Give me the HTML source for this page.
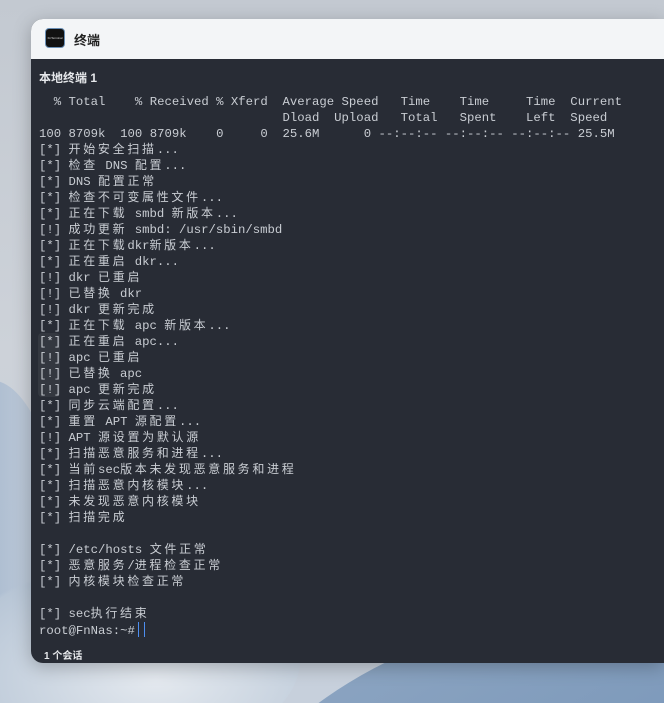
<!DOCTYPE html>
<html><head><meta charset="utf-8"><style>
html,body{margin:0;width:664px;height:703px;overflow:hidden}
body{position:relative;font-family:"Liberation Sans","Noto Sans CJK SC",sans-serif}
.bg{position:absolute;left:0;top:0;width:664px;height:703px;overflow:hidden;background:linear-gradient(180deg,#c3c9d1 0%,#cdd2d9 50%,#c7d0dc 100%)}
.wave{position:absolute;left:240px;top:600px;width:700px;height:300px;border-radius:50% 0 0 0;background:linear-gradient(160deg,#8ea6c2,#6f8fb5);transform:rotate(-12deg)}
.wave2{position:absolute;left:-60px;top:560px;width:360px;height:200px;border-radius:50%;background:radial-gradient(ellipse at 60% 60%,#e4e9ef,#b8c6d6 70%,transparent 72%)}
.lw{position:absolute;left:-80px;top:380px;width:140px;height:340px;border-radius:50%;background:linear-gradient(90deg,#7f9bbd,#c8d2de);opacity:.8}
.win{position:absolute;left:31px;top:19px;width:633px;height:644px;border-radius:12px 0 0 12px;overflow:hidden;background:#282c35;box-shadow:0 4px 18px rgba(0,0,0,.25)}
.tb{height:40px;background:#f3f5f7;position:relative}
.ic{position:absolute;left:14px;top:9px;width:20px;height:20px;border-radius:4px;background:#111;border:1px solid #6a8fb5;box-sizing:border-box;color:#ddd;font-size:3px;line-height:18px;text-align:center;overflow:hidden}
.tt{position:absolute;left:43px;top:11px;font-size:13px;font-weight:bold;color:#222}
.h{position:absolute;left:8px;top:50px;color:#e6e8eb;font-size:12px;font-weight:bold}
pre{position:absolute;left:8px;top:75px;margin:0;font-family:"Liberation Mono","Noto Sans CJK SC",monospace;font-size:12.3px;line-height:16px;color:#c9cdd3}
.c{font-family:"Noto Sans CJK SC",sans-serif;letter-spacing:2.7px;font-size:12px;line-height:0}
.cur{display:inline-block;width:1px;height:15px;background:#4d8ef0;vertical-align:-3px;margin-left:3px;box-shadow:6px 0 0 #4d8ef0}
.ft{position:absolute;left:13px;top:628px;color:#e6e8eb;font-size:10px;font-weight:bold}
.ov{position:absolute;left:7px;top:314px;width:22px;height:64px;background:rgba(255,255,255,.06);border-radius:4px}
</style></head><body>
<div class="bg"><div class="lw"></div><div class="wave2"></div><div class="wave"></div></div>
<div class="win">
<div class="tb"><div class="ic">FnTerminal</div><div class="tt">终端</div></div>
<div class="h">本地终端 1</div>
<div class="ov"></div>
<pre>  % Total    % Received % Xferd  Average Speed   Time    Time     Time  Current
                                 Dload  Upload   Total   Spent    Left  Speed
100 8709k  100 8709k    0     0  25.6M      0 --:--:-- --:--:-- --:--:-- 25.5M
[*] <span class="c">开始安全扫描</span>...
[*] <span class="c">检查</span> DNS <span class="c">配置</span>...
[*] DNS <span class="c">配置正常</span>
[*] <span class="c">检查不可变属性文件</span>...
[*] <span class="c">正在下载</span> smbd <span class="c">新版本</span>...
[!] <span class="c">成功更新</span> smbd: /usr/sbin/smbd
[*] <span class="c">正在下载</span>dkr<span class="c">新版本</span>...
[*] <span class="c">正在重启</span> dkr...
[!] dkr <span class="c">已重启</span>
[!] <span class="c">已替换</span> dkr
[!] dkr <span class="c">更新完成</span>
[*] <span class="c">正在下载</span> apc <span class="c">新版本</span>...
[*] <span class="c">正在重启</span> apc...
[!] apc <span class="c">已重启</span>
[!] <span class="c">已替换</span> apc
[!] apc <span class="c">更新完成</span>
[*] <span class="c">同步云端配置</span>...
[*] <span class="c">重置</span> APT <span class="c">源配置</span>...
[!] APT <span class="c">源设置为默认源</span>
[*] <span class="c">扫描恶意服务和进程</span>...
[*] <span class="c">当前</span>sec<span class="c">版本未发现恶意服务和进程</span>
[*] <span class="c">扫描恶意内核模块</span>...
[*] <span class="c">未发现恶意内核模块</span>
[*] <span class="c">扫描完成</span>

[*] /etc/hosts <span class="c">文件正常</span>
[*] <span class="c">恶意服务</span>/<span class="c">进程检查正常</span>
[*] <span class="c">内核模块检查正常</span>

[*] sec<span class="c">执行结束</span>
root@FnNas:~#<span class="cur"></span></pre>
<div class="ft">1 个会话</div>
</div>
</body></html>
